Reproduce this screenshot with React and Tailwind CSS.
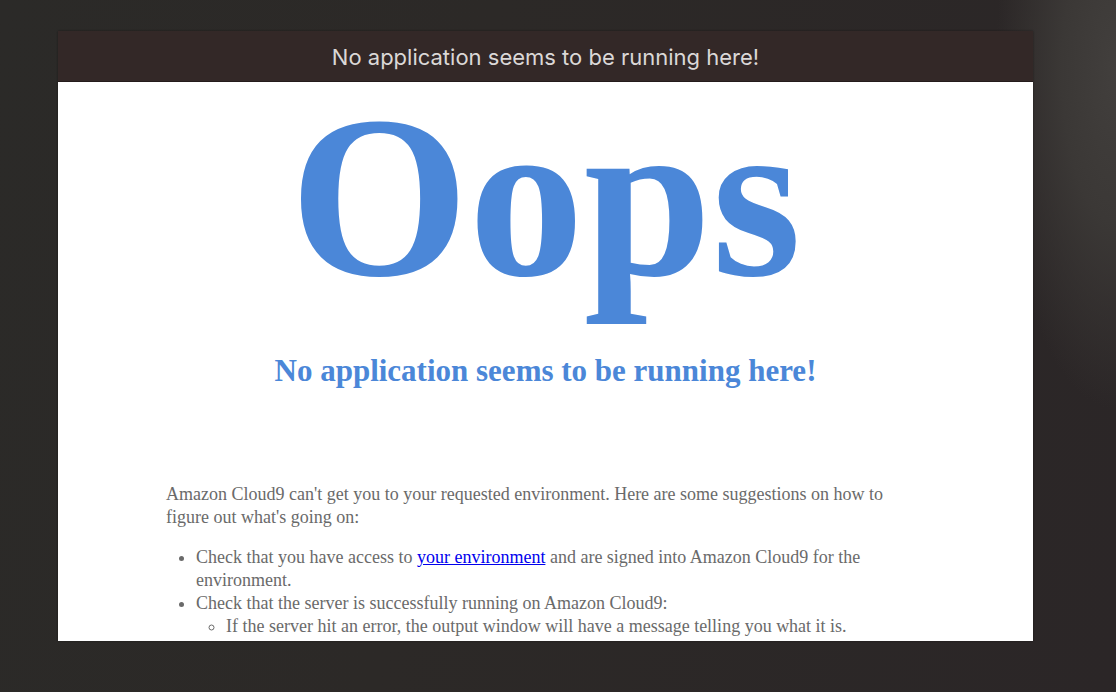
export default function App() {
  return (
    <div className="min-h-screen bg-[#2b2827] bg-[radial-gradient(ellipse_120px_340px_at_100%_10%,#423f3d_0%,#3b3836_45%,transparent_100%),linear-gradient(100deg,#2b2a28_0%,#2c2927_40%,#2b2627_100%)] pt-[31px] pr-[83px] pb-[51px] pl-[58px]">
      <div className="flex h-[calc(100vh-82px)] flex-col overflow-hidden bg-white font-['Liberation_Serif',serif] shadow-[0_0_2px_rgba(0,0,0,0.4)]">
        <header className="flex h-[51px] shrink-0 items-center justify-center border-b border-[#241b1b] bg-[#332827] pt-[3px] font-['Inter',sans-serif] text-[22px] text-[#dbd8d7]">
          No application seems to be running here!
        </header>
        <main className="text-[#6a6a6a]">
          <div className="text-center font-bold text-[#4b87d8]">
            <h1 className="text-[230px] leading-[232px]">Oops</h1>
            <h2 className="mt-[37px] text-[31px] leading-[40px]">No application seems to be running here!</h2>
          </div>
          <div className="mt-[92px] px-[108px] text-[18px] leading-[23px]">
            <p>Amazon Cloud9 can't get you to your requested environment. Here are some suggestions on how to figure out what's going on:</p>
            <ul className="mt-[17px] list-disc pl-[30px]">
              <li>Check that you have access to <a href="#environment" className="text-[#0000ee] underline">your environment</a> and are signed into Amazon Cloud9 for the environment.</li>
              <li>
                Check that the server is successfully running on Amazon Cloud9:
                <ul className="list-[circle] pl-[30px]">
                  <li>If the server hit an error, the output window will have a message telling you what it is.</li>
                </ul>
              </li>
            </ul>
          </div>
        </main>
      </div>
    </div>
  );
}
